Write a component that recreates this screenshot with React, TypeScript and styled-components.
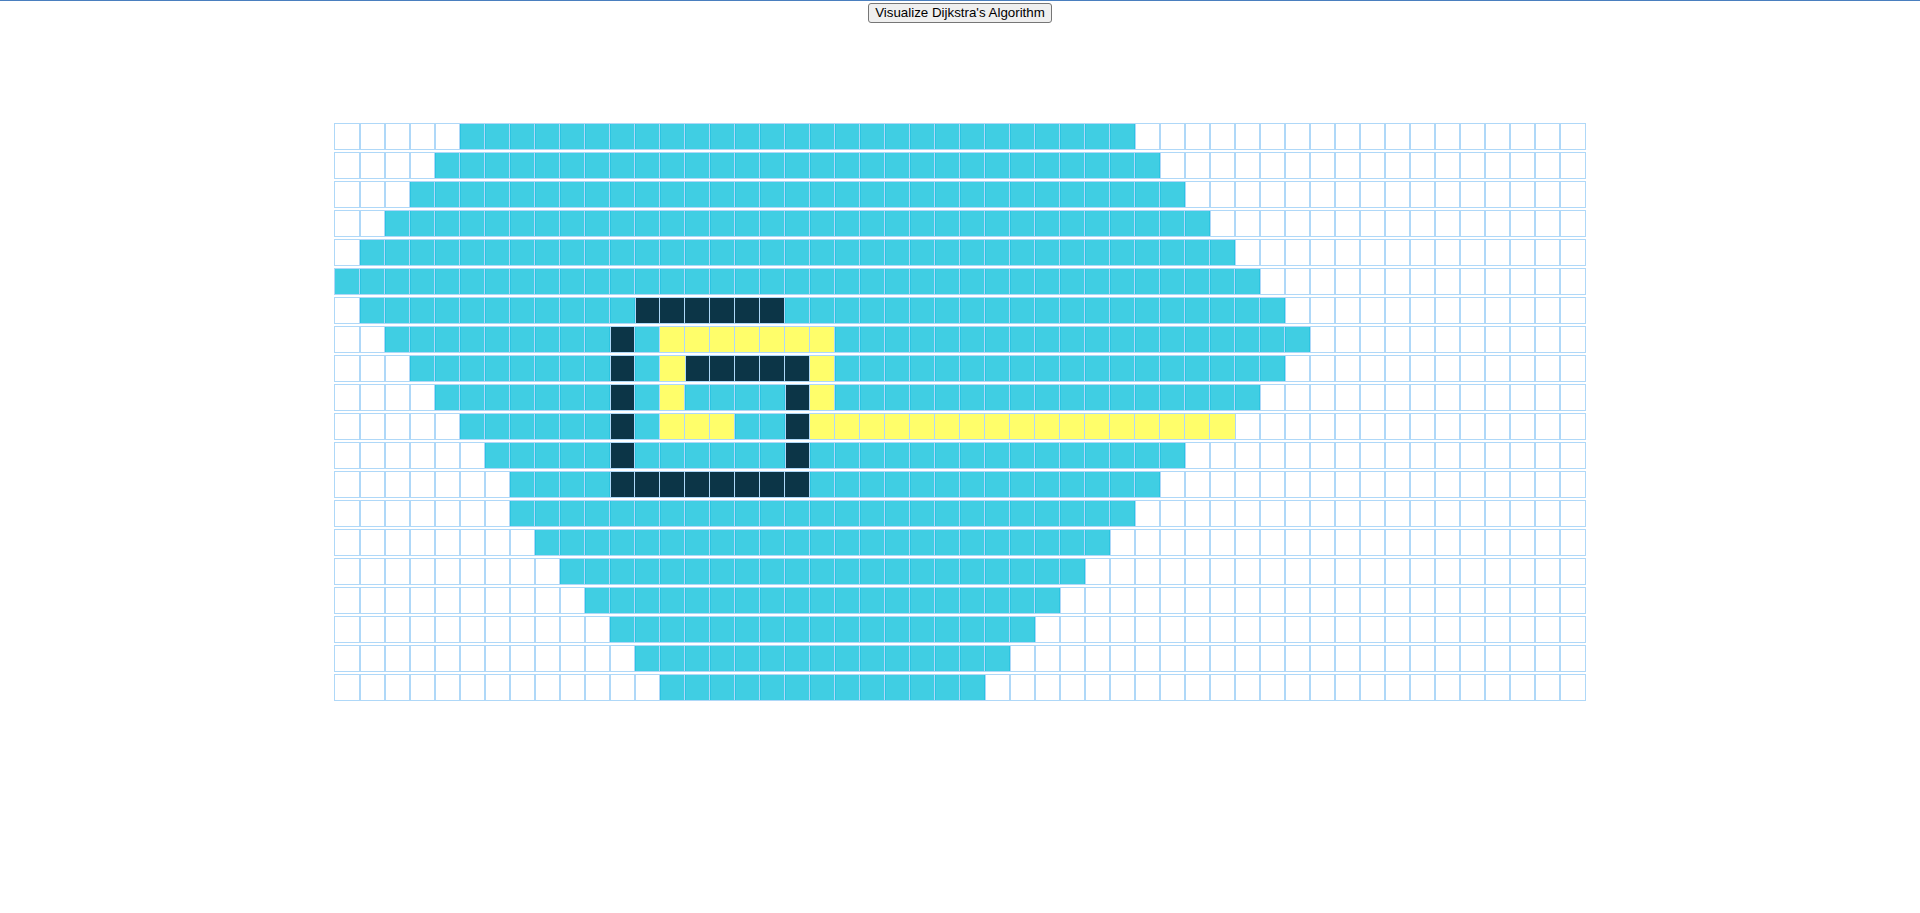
import React from "react";
import styled, { createGlobalStyle, css } from "styled-components";

const GlobalStyle = createGlobalStyle`
  html, body {
    margin: 0;
    padding: 0;
    background: #ffffff;
  }
  body {
    font-family: "Liberation Serif", "Times New Roman", serif;
  }
`;

type Kind = "empty" | "visited" | "wall" | "path";

const ROWS = 20;
const COLS = 50;

const VISITED_RANGES: [number, number][] = [
  [5, 31],
  [4, 32],
  [3, 33],
  [2, 34],
  [1, 35],
  [0, 36],
  [1, 37],
  [2, 38],
  [3, 37],
  [4, 36],
  [5, 35],
  [6, 33],
  [7, 32],
  [7, 31],
  [8, 30],
  [9, 29],
  [10, 28],
  [11, 27],
  [12, 26],
  [13, 25],
];

function isWall(r: number, c: number): boolean {
  if (r === 6 && c >= 12 && c <= 17) return true;
  if (c === 11 && r >= 7 && r <= 12) return true;
  if (r === 12 && c >= 11 && c <= 18) return true;
  if (c === 18 && r >= 9 && r <= 12) return true;
  if (r === 8 && c >= 14 && c <= 18) return true;
  return false;
}

function isPath(r: number, c: number): boolean {
  if (r === 7 && c >= 13 && c <= 19) return true;
  if ((r === 8 || r === 9) && (c === 13 || c === 19)) return true;
  if (r === 10 && ((c >= 13 && c <= 15) || (c >= 19 && c <= 35))) return true;
  return false;
}

function kindOf(r: number, c: number): Kind {
  if (isWall(r, c)) return "wall";
  if (isPath(r, c)) return "path";
  const [s, e] = VISITED_RANGES[r];
  if (c >= s && c <= e) return "visited";
  return "empty";
}

const Page = styled.div`
  border-top: 1px solid #4a7fbf;
  min-height: 912px;
  background: #ffffff;
`;

const Header = styled.div`
  height: 23px;
  display: flex;
  justify-content: center;
  align-items: flex-start;
`;

const VisualizeButton = styled.button`
  margin-top: 2px;
  height: 20px;
  box-sizing: border-box;
  padding: 0 6px;
  font-family: "Liberation Sans", Arial, sans-serif;
  font-size: 13.333px;
  line-height: 16px;
  color: #000000;
  background: #efefef;
  border: 1px solid #767676;
  border-radius: 3px;
  cursor: pointer;
`;

const Board = styled.div`
  margin-top: 100px;
  display: flex;
  flex-direction: column;
  align-items: center;
  gap: 4px;
`;

const Row = styled.div`
  display: flex;
`;

const kindStyles: Record<Kind, ReturnType<typeof css>> = {
  empty: css`
    background-color: transparent;
  `,
  visited: css`
    background-color: rgba(0, 190, 218, 0.75);
    transform: scale(1);
  `,
  wall: css`
    background-color: rgb(12, 53, 71);
  `,
  path: css`
    background-color: rgb(255, 254, 106);
    transform: scale(1);
  `,
};

const Node = styled.div<{ $kind: Kind }>`
  width: 25px;
  height: 25px;
  flex: 0 0 25px;
  outline: 1px solid rgb(175, 216, 248);
  ${(p) => kindStyles[p.$kind]}
`;

export default function App() {
  const rows = Array.from({ length: ROWS }, (_, r) =>
    Array.from({ length: COLS }, (_, c) => kindOf(r, c))
  );
  return (
    <>
      <GlobalStyle />
      <Page>
        <Header>
          <VisualizeButton type="button">Visualize Dijkstra's Algorithm</VisualizeButton>
        </Header>
        <Board>
          {rows.map((row, r) => (
            <Row key={r}>
              {row.map((k, c) => (
                <Node key={c} $kind={k} />
              ))}
            </Row>
          ))}
        </Board>
      </Page>
    </>
  );
}
